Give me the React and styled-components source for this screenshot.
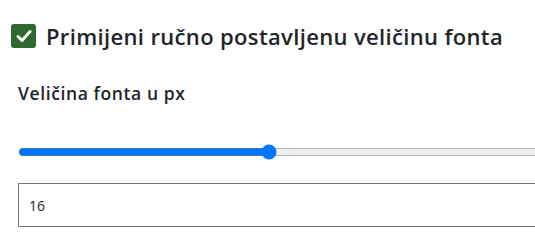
import React, { useState } from 'react';
import styled, { createGlobalStyle } from 'styled-components';

const GlobalStyle = createGlobalStyle`
  html, body {
    margin: 0;
    padding: 0;
    background: #fff;
    overflow: hidden;
  }
  body {
    font-family: "Open Sans", "Liberation Sans", sans-serif;
    color: #212529;
  }
`;

const Panel = styled.div`
  display: flex;
  flex-direction: column;
  padding: 24px 0 0 18px;
  width: 705px;
`;

const CheckRow = styled.label`
  display: flex;
  align-items: center;
  gap: 10px;
  margin-left: -7px;
  cursor: pointer;
`;

const Box = styled.span`
  display: flex;
  align-items: center;
  justify-content: center;
  width: 25px;
  height: 24px;
  border-radius: 3px;
  background: ${p => (p.$on ? '#2e6930' : '#fff')};
  border: ${p => (p.$on ? 'none' : '1px solid #767676')};
  flex-shrink: 0;
`;

const Title = styled.span`
  font-size: 22px;
  font-weight: 600;
  letter-spacing: 0.35px;
  line-height: 24px;
`;

const FieldLabel = styled.div`
  margin-top: 35px;
  font-size: 17.5px;
  font-weight: 600;
  letter-spacing: 0.6px;
  line-height: 20px;
`;

const Range = styled.input`
  margin: 41px 0 0 0;
  width: 705px;
  accent-color: #0075ff;
`;

const NumberBox = styled.input`
  margin-top: 23px;
  box-sizing: border-box;
  width: 705px;
  height: 44px;
  padding: 0 10px;
  border: 1px solid #767676;
  border-radius: 0;
  font-family: inherit;
  font-size: 14px;
  color: #212529;
  outline: none;
`;

const App = () => {
  const [on, setOn] = useState(true);
  const [size, setSize] = useState(16);

  return (
    <>
      <GlobalStyle />
      <Panel>
        <CheckRow onClick={() => setOn(!on)}>
          <Box $on={on}>
            {on && (
              <svg width="16" height="14" viewBox="0 0 16 14">
                <path d="M2 7.5 L6 11.5 L14 2.5" fill="none" stroke="#fff" strokeWidth="3" strokeLinecap="round" strokeLinejoin="round" />
              </svg>
            )}
          </Box>
          <Title>Primijeni ručno postavljenu veličinu fonta</Title>
        </CheckRow>
        <FieldLabel>Veličina fonta u px</FieldLabel>
        <Range type="range" min="10" max="27" value={size} onChange={e => setSize(e.target.value)} />
        <NumberBox type="text" value={size} onChange={e => setSize(e.target.value)} />
      </Panel>
    </>
  );
};

export default App;
